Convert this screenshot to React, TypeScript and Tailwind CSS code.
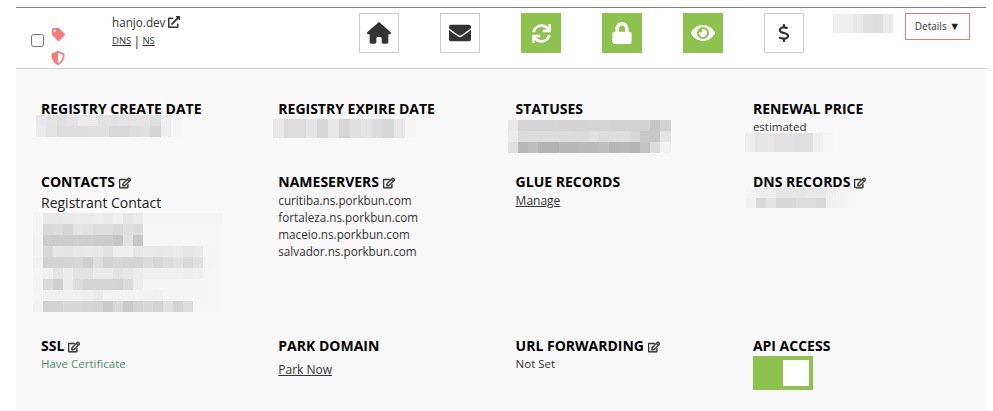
import type { ReactNode } from 'react'
import {
  FaEnvelope,
  FaExternalLinkAlt,
  FaEye,
  FaLock,
  FaRegEdit,
  FaShieldAlt,
  FaSync,
  FaTag,
} from 'react-icons/fa'
import { FaDollarSign, FaHouse } from 'react-icons/fa6'

// Gray levels of the blurred-out values, one hex byte per cell
function Pixelated({ rows, cellW = 10, cellH = 11 }: { rows: string[]; cellW?: number; cellH?: number }) {
  return (
    <div className="flex flex-col">
      {rows.map((row, i) => (
        <div key={i} className="flex">
          {row.split(' ').map((v, j) => (
            <span key={j} style={{ width: cellW, height: cellH, backgroundColor: `#${v}${v}${v}` }} />
          ))}
        </div>
      ))}
    </div>
  )
}

function IconBox({ active, children }: { active?: boolean; children: ReactNode }) {
  return (
    <div
      className={`flex h-10 w-10 items-center justify-center border ${
        active ? 'border-[#8ec24f] bg-[#8ec24f] text-white' : 'border-[#cccccc] bg-white text-[#333333]'
      }`}
    >
      {children}
    </div>
  )
}

function Heading({ children, edit }: { children: ReactNode; edit?: boolean }) {
  return (
    <h3 className="flex h-4 items-center text-[14px] font-bold leading-4 text-black">
      {children}
      {edit && <FaRegEdit className="ml-[4px] mt-px stroke-current stroke-[24] text-[12px] text-[#333333]" />}
    </h3>
  )
}

export default function App() {
  return (
    <div className="h-[411px] w-[993px] overflow-hidden bg-white pt-[7px] pl-4 font-['Open_Sans',sans-serif] text-[#333333]">
      <div className="w-[970px]">
        {/* Domain row */}
        <div className="flex h-[62px] border-t border-b border-t-[#808080] border-b-[#cccccc]">
          <div className="flex w-[96px] pl-[15px]">
            <input type="checkbox" className="mt-[26px] h-[13px] w-[13px]" />
            <div className="ml-[7px] flex flex-col items-center pt-5 text-[#f47e7e]">
              <FaTag className="text-[13px]" />
              <FaShieldAlt className="mt-[10px] text-[14px]" />
            </div>
          </div>

          <div className="w-[247px] pt-[6px]">
            <div className="flex items-center text-[11.7px] leading-4">
              hanjo.dev
              <FaExternalLinkAlt className="ml-[3px] text-[12px]" />
            </div>
            <div className="mt-[4px] flex items-center text-[9.5px] leading-[14px]">
              <a className="underline">DNS</a>
              <span className="mx-[2px] text-[13px]">|</span>
              <a className="underline">NS</a>
            </div>
          </div>

          <div className="flex gap-[41px] pt-[5px]">
            <IconBox>
              <FaHouse className="text-[24px]" />
            </IconBox>
            <IconBox>
              <FaEnvelope className="text-[22px]" />
            </IconBox>
            <IconBox active>
              <FaSync className="text-[19px]" />
            </IconBox>
            <IconBox active>
              <FaLock className="text-[22px]" />
            </IconBox>
            <IconBox active>
              <FaEye className="text-[24px]" />
            </IconBox>
            <IconBox>
              <FaDollarSign className="text-[18px]" />
            </IconBox>
          </div>

          <div className="ml-[29px] pt-[6px]">
            <Pixelated rows={['ef ee e8 e0 dd ea']} cellH={19} />
          </div>

          <div className="ml-[12px] pt-[5px]">
            <button className="flex h-[27px] w-[65px] items-center justify-center border border-[#ec7a7a] text-[10px]">
              Details&nbsp;<span className="text-[11px] text-[#222222]">▼</span>
            </button>
          </div>
        </div>

        {/* Details panel */}
        <div className="grid h-[342px] grid-cols-[237.3px_237.3px_237.3px_1fr] grid-rows-[73px_164px_auto] bg-[#f8f8f8] pt-8 pl-[25px] text-[12px] leading-[17px]">
          <div>
            <Heading>REGISTRY CREATE DATE</Heading>
            <div className="-ml-[5px] -mt-[2px]">
              <Pixelated
                rows={[
                  'e8 e4 e0 e3 ea ea e2 e2 e4 e4 e4 de ee f5',
                  'ea e3 dd dd dd e0 e0 d9 d9 dd e0 d5 ee f5',
                ]}
                cellW={10.4}
              />
            </div>
          </div>
          <div>
            <Heading>REGISTRY EXPIRE DATE</Heading>
            <div className="-ml-[5px] mt-[2px]">
              <Pixelated rows={['e8 dc dc e4 d8 e8 d5 e0 e4 dc d8 e6 f5']} cellW={11} cellH={19} />
            </div>
          </div>
          <div>
            <Heading>STATUSES</Heading>
            <div className="-ml-2 mt-[3px]">
              <Pixelated
                rows={[
                  'e8 d5 d5 d5 d5 d3 d3 d3 d4 d4 d2 d2 d2 d2 c5 d2',
                  'ea da dc dc dc dc db db e0 dd dd dd d8 c8 c8 e4',
                  'e0 b8 be b2 b2 b8 b8 ba ba be b6 b8 b4 c4 dc f2',
                ]}
                cellW={10.2}
              />
            </div>
          </div>
          <div>
            <Heading>RENEWAL PRICE</Heading>
            <div className="mt-[3px] text-[11.5px] leading-[14px]">estimated</div>
            <div className="-ml-2 -mt-px">
              <Pixelated rows={['ee e6 e6 e2 e2 e0 de ef f6']} cellW={9.8} cellH={19} />
            </div>
          </div>

          <div>
            <Heading edit>CONTACTS</Heading>
            <div className="mt-[3px] text-[14px] leading-[20px] text-[#222222]">Registrant Contact</div>
            <div className="-ml-2">
              <Pixelated
                rows={[
                  'f4 e9 e9 ea ec ec ee eb ef e6 ea f5 f5 f5 f5 f5 f5 f5 f5',
                  'f4 d8 db d6 e4 e2 dc dc d9 e0 db f6 f6 f6 f6 f6 f6 f6 f6',
                  'f3 cc cc cc cd cd cb cb c5 e2 c6 f6 f6 f6 f6 f6 f6 f6 f6',
                  'f3 d8 e6 e4 e8 e9 e8 e2 ee ef e6 ea e8 e9 ec e6 e9 f5 f6',
                  'f2 d2 d4 d5 d6 cf df d2 d6 d4 d4 db d6 dc e1 da e0 f5 f6',
                  'f5 ef e4 ec e2 e2 ea ea e2 e6 ec ef ef ef ef ed ef f6 f6',
                  'f4 da cf ec dc d5 d5 d5 d3 da ec f5 f5 f5 f5 f5 f5 f6 f6',
                  'f5 f0 f0 f0 f0 ee ea f2 f2 f2 f2 f3 f1 f5 f5 f5 f5 f6 f6',
                  'f3 d2 d2 d8 d6 d4 d2 c9 d9 c9 d2 d8 d2 df d3 dc f6 f6 f6',
                ]}
              />
            </div>
          </div>
          <div>
            <Heading edit>NAMESERVERS</Heading>
            <div className="mt-[2px] text-[11.7px]">
              <div>curitiba.ns.porkbun.com</div>
              <div>fortaleza.ns.porkbun.com</div>
              <div>maceio.ns.porkbun.com</div>
              <div>salvador.ns.porkbun.com</div>
            </div>
          </div>
          <div>
            <Heading>GLUE RECORDS</Heading>
            <a className="mt-[2px] block underline">Manage</a>
          </div>
          <div>
            <Heading edit>DNS RECORDS</Heading>
            <div className="-ml-[7px] -mt-[2px]">
              <Pixelated
                rows={['f4 ec ee e6 e6 e6 e8 e8 ef f3 f6', 'f2 d8 e4 d8 d8 dc dc d9 f0 f3 f6']}
                cellH={10}
              />
            </div>
          </div>

          <div>
            <Heading edit>SSL</Heading>
            <div className="mt-[2px] text-[11.5px] leading-[16px] text-[#4f8a6b]">Have Certificate</div>
          </div>
          <div>
            <Heading>PARK DOMAIN</Heading>
            <a className="mt-[7px] block underline">Park Now</a>
          </div>
          <div>
            <Heading edit>URL FORWARDING</Heading>
            <div className="mt-[2px] text-[11.5px] leading-[16px]">Not Set</div>
          </div>
          <div>
            <Heading>API ACCESS</Heading>
            <div className="mt-[2px] flex h-[34px] w-[60px] items-center justify-end bg-[#8ec24f] pr-1">
              <span className="h-[26px] w-[26px] bg-white" />
            </div>
          </div>
        </div>
      </div>
    </div>
  )
}
